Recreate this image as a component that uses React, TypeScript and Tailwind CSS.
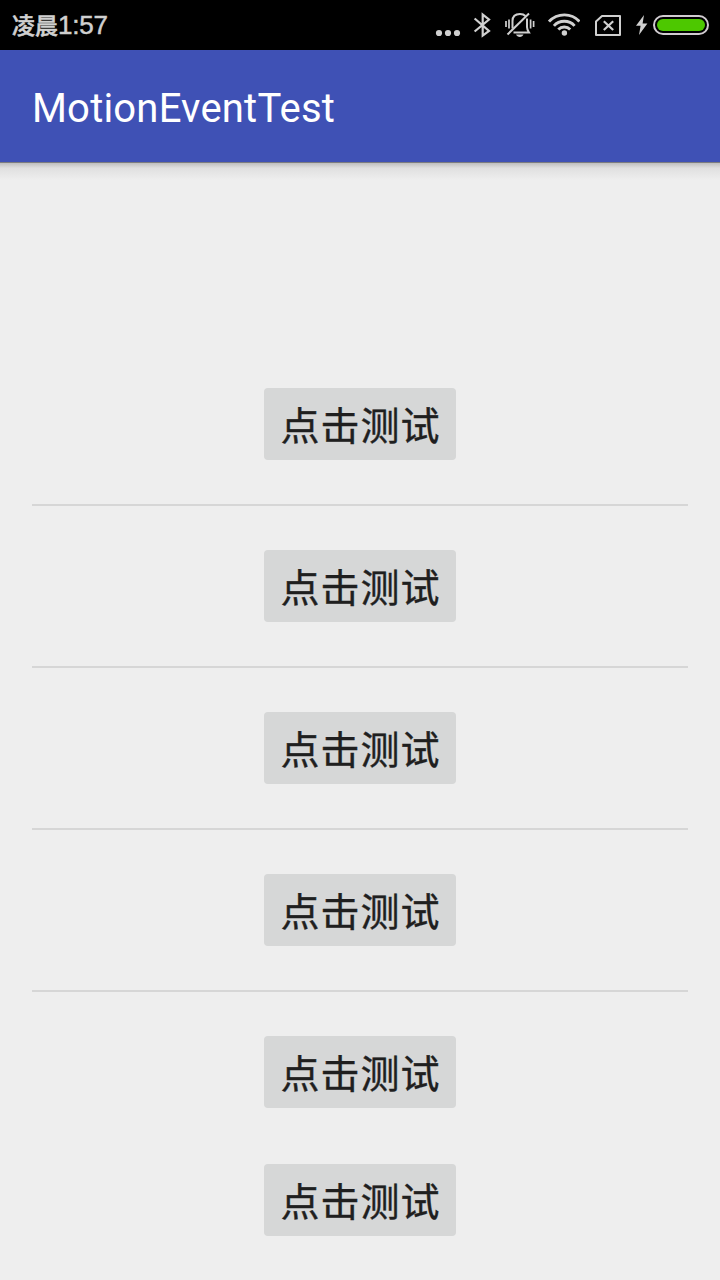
import React from 'react';

interface RowItem {
  id: number;
  divider: boolean;
}

const rows: RowItem[] = [
  { id: 1, divider: true },
  { id: 2, divider: true },
  { id: 3, divider: true },
  { id: 4, divider: true },
  { id: 5, divider: false },
  { id: 6, divider: false },
];

const DotsIcon = () => (
  <svg width="26" height="50" viewBox="0 0 26 50" fill="currentColor">
    <circle cx="4" cy="33" r="3.1" />
    <circle cx="13" cy="33" r="3.1" />
    <circle cx="22" cy="33" r="3.1" />
  </svg>
);

const BluetoothIcon = () => (
  <svg width="18" height="50" viewBox="0 0 18 50" fill="none" stroke="currentColor" strokeWidth="2.2">
    <path d="M1.6 18.5 L16 31 L9.7 35.6 V14.6 L16 19.5 L1.6 31.5" />
  </svg>
);

const VibrateIcon = () => (
  <svg width="30" height="50" viewBox="0 0 30 50" fill="none" stroke="currentColor" strokeWidth="2">
    <path d="M1 21 V27 M4 19.5 V28.5 M25.6 19.5 V28.5 M28.6 21 V27" strokeWidth="1.7" />
    <path d="M7.5 28.5 V21 C7.5 16.5 10.5 14 15 14 C17.5 14 19.2 14.7 20.5 16" />
    <path d="M22 18.5 V27 C22 29.5 22.6 30.5 24 32.6 H8.5" />
    <path d="M2.5 34.5 L24 13.5" />
    <path d="M11 34.6 H18.5 C17.8 36.2 16.6 37 14.8 37 C13 37 11.7 36.2 11 34.6 Z" fill="currentColor" stroke="none" />
  </svg>
);

const WifiIcon = () => (
  <svg width="32" height="50" viewBox="0 0 32 50" fill="none" stroke="currentColor" strokeWidth="2.9">
    <path d="M1 21.6 C9.3 12.6 23.7 12.6 31.4 21.6" />
    <path d="M5.9 25.9 C11.4 19.8 21.2 19.8 26.6 25.9" />
    <path d="M10.3 29.5 C13.5 26.1 19 26.1 22.2 29.5" />
    <circle cx="16.4" cy="33" r="2.7" fill="currentColor" stroke="none" />
  </svg>
);

const NoSimIcon = () => (
  <svg width="26" height="50" viewBox="0 0 26 50" fill="none" stroke="currentColor" strokeWidth="2">
    <path d="M7 16 H25 V35 H1 V21.5 Z" strokeLinejoin="round" />
    <path d="M8.8 21.2 L18.2 30 M18.2 21.2 L8.8 30" strokeWidth="2.2" />
  </svg>
);

const BoltIcon = () => (
  <svg width="12" height="50" viewBox="0 0 12 50" fill="currentColor">
    <path d="M8 15 L0 25.7 H4.6 L3 35 L11.4 23.4 H6.6 Z" />
  </svg>
);

const BatteryIcon = () => (
  <svg width="56" height="50" viewBox="0 0 56 50">
    <rect x="1" y="16" width="54" height="18" rx="9" fill="none" stroke="#d0cbd0" strokeWidth="2" />
    <rect x="4" y="19" width="48" height="12" rx="6" fill="#4dc800" />
  </svg>
);

const StatusBar: React.FC = () => (
  <div className="flex h-[50px] shrink-0 items-center bg-black pr-[11px] pl-3 text-[#d0d0d0]">
    <div className="flex items-baseline pb-0.5 font-medium whitespace-nowrap [-webkit-text-stroke:0.5px_#d0d0d0]">
      <span className="font-['Noto_Sans_CJK_SC',sans-serif] text-[23px] leading-[48px]">凌晨</span>
      <span className="font-['Liberation_Sans',sans-serif] text-[26px] leading-[48px] tracking-[-0.2px]">1:57</span>
    </div>
    <div className="ml-auto flex items-center">
      <DotsIcon />
      <div className="ml-3"><BluetoothIcon /></div>
      <div className="ml-[14px]"><VibrateIcon /></div>
      <div className="ml-[13px]"><WifiIcon /></div>
      <div className="ml-[15px]"><NoSimIcon /></div>
      <div className="ml-[15px]"><BoltIcon /></div>
      <div className="ml-[5px]"><BatteryIcon /></div>
    </div>
  </div>
);

export default function App() {
  return (
    <div className="flex h-[1280px] w-[720px] flex-col overflow-hidden bg-[#eeeeee]">
      <StatusBar />
      <header className="flex h-28 shrink-0 items-center bg-[#3f51b5] px-8">
        <h1 className="pt-1.5 font-[Roboto,sans-serif] text-[40px] leading-[48px] font-normal tracking-[0.2px] text-white">
          MotionEventTest
        </h1>
      </header>
      {/* Sombra da barra */}
      <div className="h-px shrink-0 bg-[#7c7c7f]" />
      <div className="h-[17px] shrink-0 bg-linear-to-b from-[#bfbfbf] via-[#e0e0e0] via-30% to-[#eeeeee]" />

      <main className="flex shrink-0 flex-col px-8 pt-52">
        {rows.map((row) => (
          <React.Fragment key={row.id}>
            <button className="h-[72px] w-48 shrink-0 self-center rounded-[4px] bg-[#d6d7d7] pb-0.5 pl-px font-['Noto_Sans_CJK_SC',sans-serif] text-[39px] leading-[70px] tracking-[1px] whitespace-nowrap text-[#1f1f1f] [-webkit-text-stroke:0.4px_#1f1f1f]">
              点击测试
            </button>
            {row.divider ? (
              <div className="my-11 h-0.5 shrink-0 bg-[#d6d6d6]" />
            ) : (
              <div className="h-14 shrink-0" />
            )}
          </React.Fragment>
        ))}
      </main>
    </div>
  );
}
